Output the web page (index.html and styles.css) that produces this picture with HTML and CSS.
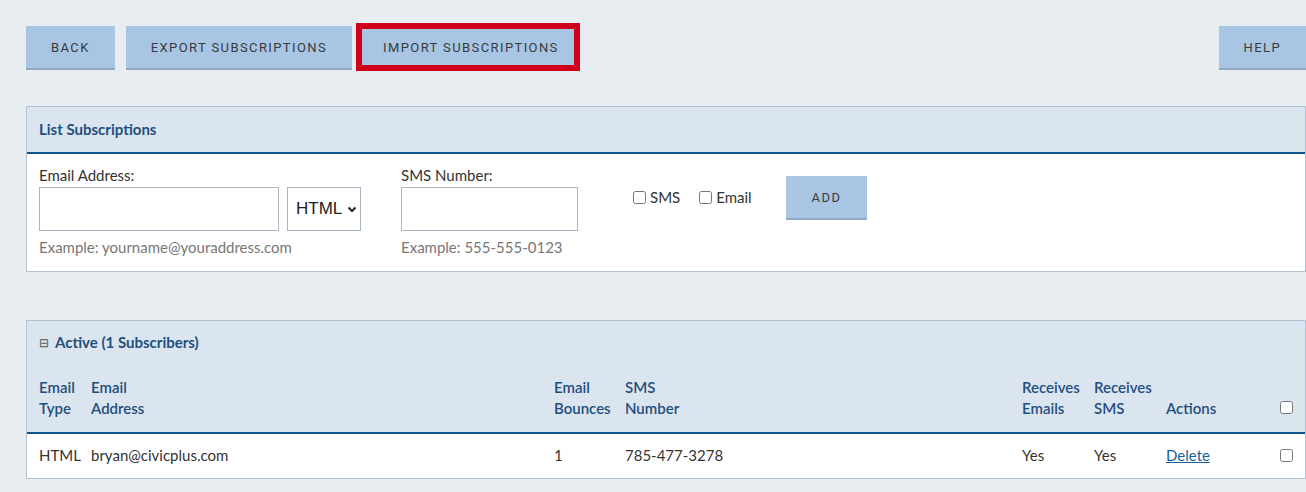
FILE: index.html
```html
<!DOCTYPE html>
<html>
<head>
<meta charset="utf-8">
<link rel="stylesheet" href="styles.css">
</head>
<body>
<div class="page">
  <div class="toolbar">
    <button class="btn">BACK</button>
    <button class="btn">EXPORT SUBSCRIPTIONS</button>
    <button class="btn btn-marked">IMPORT SUBSCRIPTIONS<span class="mark"></span></button>
    <button class="btn btn-help">HELP</button>
  </div>

  <section class="panel panel-form">
    <div class="panel-head">List Subscriptions</div>
    <div class="form-body">
      <div class="field field-email">
        <label class="label">Email Address:</label>
        <div class="inputs">
          <input class="text-input email-input" type="text">
          <div class="select"><span>HTML</span><svg class="chev" width="10" height="7" viewBox="0 0 10 7"><path d="M1.5 1.5 L5 5 L8.5 1.5" fill="none" stroke="#222" stroke-width="2"/></svg></div>
        </div>
        <div class="hint">Example: yourname@youraddress.com</div>
      </div>
      <div class="field field-sms">
        <label class="label">SMS Number:</label>
        <div class="inputs">
          <input class="text-input sms-input" type="text">
        </div>
        <div class="hint">Example: 555-555-0123</div>
      </div>
      <div class="checks">
        <label class="check"><input type="checkbox">SMS</label>
        <label class="check"><input type="checkbox">Email</label>
      </div>
      <button class="btn btn-add">ADD</button>
    </div>
  </section>

  <section class="panel panel-list">
    <div class="list-head">
      <div class="list-title"><span class="collapse">&#8863;</span>Active (1 Subscribers)</div>
      <table class="subs">
        <colgroup>
          <col class="c1"><col class="c2"><col class="c3"><col class="c4"><col class="c5"><col class="c6"><col class="c7"><col class="c8">
        </colgroup>
        <thead>
          <tr>
            <th>Email<br>Type</th>
            <th>Email<br>Address</th>
            <th>Email<br>Bounces</th>
            <th>SMS<br>Number</th>
            <th>Receives<br>Emails</th>
            <th>Receives<br>SMS</th>
            <th>Actions</th>
            <th class="cb-cell"><input type="checkbox"></th>
          </tr>
        </thead>
        <tbody>
          <tr>
            <td>HTML</td>
            <td>bryan@civicplus.com</td>
            <td>1</td>
            <td>785-477-3278</td>
            <td>Yes</td>
            <td>Yes</td>
            <td><a href="#" class="link">Delete</a></td>
            <td class="cb-cell"><input type="checkbox"></td>
          </tr>
        </tbody>
      </table>
    </div>
  </section>
</div>
</body>
</html>
```

FILE: styles.css
```css
html, body {
  margin: 0;
  padding: 0;
  background: #e8edf2;
  overflow: hidden;
}
body {
  font-family: "Lato", "Open Sans", sans-serif;
  font-size: 15px;
  color: #333;
}
.page {
  margin-left: 26px;
  width: 1280px;
  padding-top: 26px;
}
.toolbar {
  display: flex;
  align-items: flex-start;
  gap: 11px;
}
.btn {
  position: relative;
  box-sizing: border-box;
  height: 44px;
  padding: 0 25px;
  background: #a8c6e3;
  border: 0;
  border-bottom: 2px solid #90a9c4;
  font-family: "Roboto", "Liberation Sans", sans-serif;
  font-size: 13px;
  font-weight: 400;
  letter-spacing: 1.4px;
  color: #3a3a3a;
  cursor: pointer;
}
.btn-marked {
  margin-left: -5px;
  padding: 0 20px 0 25px;
}
.mark {
  position: absolute;
  left: -2px;
  right: -1px;
  top: -3px;
  bottom: -3px;
  border: 6px solid #d0021b;
}
.btn-help {
  margin-left: auto;
}
.panel {
  background: #fff;
  border: 1px solid #b3c1d1;
}
.panel-form {
  margin-top: 36px;
}
.panel-head {
  background: #dbe5f0;
  height: 45px;
  line-height: 45px;
  padding-left: 12px;
  font-weight: 700;
  font-size: 15px;
  color: #1f4f7d;
  border-bottom: 2.5px solid #0e5389;
}
.form-body {
  display: flex;
  align-items: flex-start;
  padding: 11px 12px 13px;
}
.field {
  display: flex;
  flex-direction: column;
}
.label {
  line-height: 21px;
  height: 21px;
  margin-bottom: 1px;
}
.inputs {
  display: flex;
  gap: 8px;
}
.text-input {
  box-sizing: border-box;
  height: 44px;
  border: 1px solid #aab6c3;
  background: #fff;
  margin: 0;
}
.email-input { width: 240px; }
.sms-input { width: 177px; }
.select {
  box-sizing: border-box;
  width: 74px;
  height: 44px;
  border: 1px solid #aab6c3;
  display: flex;
  align-items: center;
  padding-left: 8px;
  gap: 5px;
  font-family: "Liberation Sans", Arial, sans-serif;
  font-size: 17px;
  color: #222;
}
.chev { margin-top: 1px; }
.hint {
  margin-top: 6px;
  line-height: 21px;
  color: #777;
}
.field-sms {
  margin-left: 40px;
}
.checks {
  display: flex;
  gap: 19px;
  margin-left: 55px;
  margin-top: 22px;
  line-height: 21px;
}
.check {
  display: flex;
  align-items: center;
}
.check input {
  margin: 0 4px 0 0;
  width: 13px;
  height: 13px;
}
.btn-add {
  margin-left: 34px;
  margin-top: 11px;
  padding: 0 26px;
}
.list-head {
  background: #dbe5f0;
}
.panel-list {
  margin-top: 48px;
}
.list-title {
  padding: 11px 12px 0;
  line-height: 21px;
  font-weight: 700;
  font-size: 15px;
  color: #1f4f7d;
}
.collapse {
  font-size: 12px;
  font-weight: 400;
  color: #555;
  margin-right: 6px;
  position: relative;
  top: -1px;
}
.subs {
  width: 1278px;
  table-layout: fixed;
  border-collapse: collapse;
}
.c1 { width: 52px; }
.c2 { width: 463px; }
.c3 { width: 71px; }
.c4 { width: 397px; }
.c5 { width: 72px; }
.c6 { width: 72px; }
.c7 { width: 114px; }
.c8 { width: 37px; }
.subs th {
  text-align: left;
  vertical-align: bottom;
  font-weight: 600;
  color: #1f4f7d;
  line-height: 21px;
  padding: 23px 0 13px 12px;
  border-bottom: 2.5px solid #0e5389;
}
.subs td {
  background: #fff;
  height: 43px;
  line-height: 21px;
  padding: 0 0 1px 12px;
  vertical-align: middle;
}
.cb-cell input {
  margin: 0;
  width: 13px;
  height: 13px;
  vertical-align: middle;
}
.subs td.cb-cell input {
  position: relative;
  top: -2px;
}
.subs th.cb-cell {
  padding-bottom: 16px;
}
.link {
  color: #1a5e99;
  text-decoration: underline;
}
```
